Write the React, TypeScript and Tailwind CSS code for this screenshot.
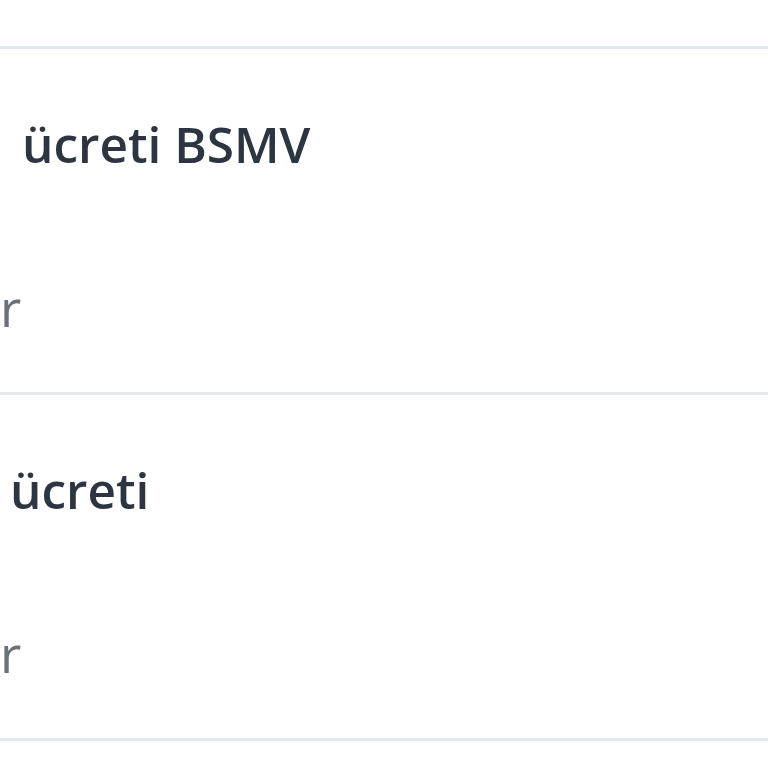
const rows = [
  { title: "ücreti BSMV", indent: "pl-[22px]", note: "r" },
  { title: "ücreti", indent: "pl-[10px]", note: "r" },
];

function Row({ title, indent, note }: { title: string; indent: string; note: string }) {
  return (
    <div className="flex flex-col border-b-[3px] border-[#e4e9f0] pt-[67px] pb-[55px]">
      <div className={`${indent} text-[49.5px] leading-[56px] font-semibold text-[#2c3540] whitespace-nowrap`}>
        {title}
      </div>
      <div className="mt-[105px] text-[52px] leading-[60px] text-[#6b7178] whitespace-nowrap">
        {note}
      </div>
    </div>
  );
}

export default function App() {
  return (
    <div className="w-[768px] h-[768px] overflow-hidden bg-white font-['Open_Sans',sans-serif]">
      <div className="h-[49px] border-b-[3px] border-[#e4e9f0]" />
      {rows.map((r) => (
        <Row key={r.indent} {...r} />
      ))}
    </div>
  );
}
